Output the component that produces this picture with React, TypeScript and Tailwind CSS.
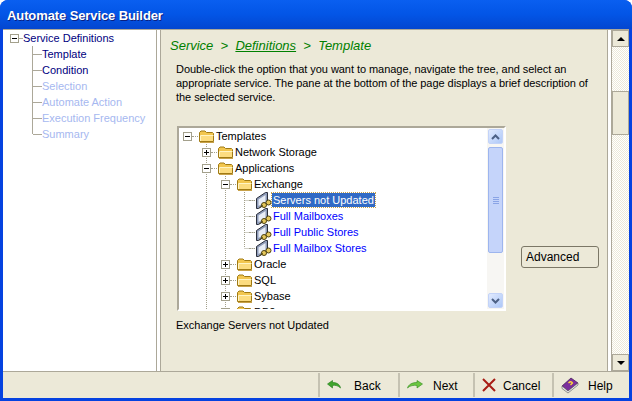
import React from 'react';

const Folder = () => (
  <svg width="17" height="16" viewBox="0 0 17 16" className="shrink-0">
    <path d="M1.5 13.5V4.5L3 3H7L8.5 4.5H14.5L15.5 5.5V13.5Z" fill="#f2c64f" stroke="#a07a14" />
    <path d="M3 8H15V13H3Z" fill="#fcdc80" />
    <path d="M2.5 13V7.5H15.5" fill="none" stroke="#fff4c4" />
    <path d="M2 14.5H16" stroke="#c8a24a" />
  </svg>
);

const ServerKey = () => (
  <svg width="17" height="17" viewBox="0 0 17 17" className="shrink-0">
    <path d="M1.5 6.5L10.5 0.5H12.5V11L3.5 16.5H1.5Z" fill="#8e9bb8" stroke="#2a2f3c" />
    <path d="M3.5 7.5L10.5 3V10L3.5 14Z" fill="#e8edf6" />
    <circle cx="9" cy="13" r="2.5" fill="#e6c85c" stroke="#4e4210" />
    <circle cx="13.5" cy="10.5" r="2.5" fill="#e6c85c" stroke="#4e4210" />
    <path d="M4.5 15.5L8 13.5" stroke="#4e4210" />
  </svg>
);

const ExpandBox = ({ open }: { open: boolean }) => (
  <svg width="9" height="9" viewBox="0 0 9 9" className="shrink-0">
    <rect x="0.5" y="0.5" width="8" height="8" fill="#fff" stroke="#a3a08c" />
    <path d="M2 4.5H7" stroke="#000" />
    {!open && <path d="M4.5 2V7" stroke="#000" />}
  </svg>
);

const treeRows = [
  { label: 'Templates', indent: 4, kind: 'open' },
  { label: 'Network Storage', indent: 23, kind: 'closed' },
  { label: 'Applications', indent: 23, kind: 'open' },
  { label: 'Exchange', indent: 42, kind: 'open' },
  { label: 'Servers not Updated', indent: 61, kind: 'leaf', selected: true },
  { label: 'Full Mailboxes', indent: 61, kind: 'leaf' },
  { label: 'Full Public Stores', indent: 61, kind: 'leaf' },
  { label: 'Full Mailbox Stores', indent: 61, kind: 'leaf' },
  { label: 'Oracle', indent: 42, kind: 'closed' },
  { label: 'SQL', indent: 42, kind: 'closed' },
  { label: 'Sybase', indent: 42, kind: 'closed' },
  { label: 'DB2', indent: 42, kind: 'closed' },
];

const TreeRow = ({ label, indent, kind, selected }: { label: string; indent: number; kind: string; selected?: boolean }) => (
  <div className="relative flex h-4 items-center shrink-0" style={{ paddingLeft: indent }}>
    {kind === 'leaf' ? <div className="w-[9px] shrink-0" /> : <ExpandBox open={kind === 'open'} />}
    <div className="w-[6px] h-px shrink-0 border-t border-dotted border-[#a3a08c]" />
    {kind === 'leaf' ? <ServerKey /> : <Folder />}
    <span
      className={`px-px leading-[14px] whitespace-nowrap ${
        selected
          ? 'bg-[#316ac5] text-white outline-1 outline-dotted outline-[#c9a24a]'
          : kind === 'leaf'
            ? 'text-[#0000ff]'
            : 'text-black'
      }`}
    >
      {label}
    </span>
  </div>
);

const steps = [
  { label: 'Template', cls: 'text-[#000080]' },
  { label: 'Condition', cls: 'text-[#000080]' },
  { label: 'Selection', cls: 'text-[#a6b8f0]' },
  { label: 'Automate Action', cls: 'text-[#a6b8f0]' },
  { label: 'Execution Frequency', cls: 'text-[#a6b8f0]' },
  { label: 'Summary', cls: 'text-[#a6b8f0]' },
];

const ScrollThumbLines = () => (
  <div className="flex flex-col gap-px">
    <div className="w-[6px] h-px bg-[#8aa4e6]" />
    <div className="w-[6px] h-px bg-[#8aa4e6]" />
    <div className="w-[6px] h-px bg-[#8aa4e6]" />
    <div className="w-[6px] h-px bg-[#8aa4e6]" />
  </div>
);

const Chevron = ({ up }: { up?: boolean }) => (
  <svg width="9" height="6" viewBox="0 0 9 6">
    <path d={up ? 'M1 5L4.5 1.5L8 5' : 'M1 1L4.5 4.5L8 1'} fill="none" stroke="#4d6185" strokeWidth="2" />
  </svg>
);

const FooterButton = ({ icon, label, width, gap }: { icon: React.ReactNode; label: string; width: string; gap: string }) => (
  <div className={`flex items-center h-[24px] border-l-2 border-[#c5c2b2] pl-[7px] ${width} ${gap}`}>
    {icon}
    <span className="mt-[2px]">{label}</span>
  </div>
);

export default function App() {
  return (
    <div className="w-[632px] h-[401px] bg-[#0542e0] rounded-t-[8px] flex flex-col overflow-hidden text-[11px] text-black font-['Liberation_Sans',sans-serif]">
      <div className="h-[29px] shrink-0 flex items-center pl-[7px] pt-[2px] bg-gradient-to-b from-[#0a5ff0] via-[#0355e6] to-[#0346d0]">
        <span className="font-bold text-[13px] text-white tracking-[-0.1px] [text-shadow:1px_1px_#0a1f80]">Automate Service Builder</span>
      </div>
      <div className="flex-1 min-h-0 mx-[3px] mb-[3px] bg-[#ece9d8] flex flex-col">
        <div className="h-[343px] flex shrink-0 border-t border-b border-[#aca899]">
          {/* step list */}
          <div className="w-[153px] shrink-0 bg-white pl-[7px]">
            <div className="flex items-center h-4">
              <ExpandBox open />
              <div className="w-[4px] h-px bg-[#aca899]" />
              <span className="text-[#000080]">Service Definitions</span>
            </div>
            <div className="ml-[22px]">
              {steps.map((s, i) => (
                <div key={s.label} className="flex h-4">
                  <div className={`w-px bg-[#aca899] ${i === steps.length - 1 ? 'h-[8px]' : 'h-4'}`} />
                  <div className="w-[9px] h-px mt-[8px] bg-[#aca899]" />
                  <span className={`leading-4 ${s.cls}`}>{s.label}</span>
                </div>
              ))}
            </div>
          </div>
          <div className="w-[5px] shrink-0 border-x border-[#aca899] bg-white" />
          {/* main pane */}
          <div className="flex-1 min-w-0 flex flex-col pl-[9px]">
            <div className="h-[28px] flex items-center text-[13px] italic text-[#008000] whitespace-pre mt-[2px]">
              Service  &gt;  <span className="underline">Definitions</span>  &gt;  Template
            </div>
            <p className="ml-[6px] w-[425px] leading-[14px] mt-[2px] tracking-[-0.05px]">
              Double-click the option that you want to manage, navigate the tree, and select an<br />
              appropriate service. The pane at the bottom of the page displays a brief description of<br />
              the selected service.
            </p>
            <div className="flex mt-[22px] ml-[7px]">
              <div className="w-[329px] h-[185px] shrink-0 border-2 border-t-[#aca899] border-l-[#aca899] border-r-white border-b-white bg-white flex overflow-hidden">
                <div className="flex-1 min-w-0 flex flex-col overflow-hidden relative">
                  <svg className="absolute left-0 top-0" width="120" height="190">
                    <g stroke="#a3a08c" strokeDasharray="1 1" fill="none">
                      <path d="M27.5 16V190" />
                      <path d="M46.5 48V190" />
                      <path d="M65.5 64V120" />
                      <path d="M65.5 72.5H76M65.5 88.5H76M65.5 104.5H76M65.5 120.5H76" />
                    </g>
                  </svg>
                  {treeRows.map((r) => (
                    <TreeRow key={r.label} {...r} />
                  ))}
                </div>
                <div className="w-[17px] shrink-0 bg-[#f7f6f3] flex flex-col p-px">
                  <div className="h-[15px] bg-gradient-to-br from-[#e1eafe] to-[#aec8f7] border border-[#c3d3f8] rounded-[2px] flex items-center justify-center">
                    <Chevron up />
                  </div>
                  <div className="h-[106px] mt-[3px] bg-[#c5d4fa] border border-[#9db5ee] rounded-[2px] flex items-center justify-center">
                    <ScrollThumbLines />
                  </div>
                  <div className="flex-1" />
                  <div className="h-[15px] bg-gradient-to-br from-[#e1eafe] to-[#aec8f7] border border-[#c3d3f8] rounded-[2px] flex items-center justify-center">
                    <Chevron />
                  </div>
                </div>
              </div>
              <div className="ml-[15px] mt-[120px] w-[78px] h-[22px] shrink-0 border border-[#7b7766] rounded-[3px] flex items-center pl-[4px] text-[12px]">
                Advanced
              </div>
            </div>
            <div className="ml-[6px] mt-[6px]">Exchange Servers not Updated</div>
          </div>
          <div className="w-[5px] shrink-0 border-x border-[#aca899] bg-white" />
          {/* page scrollbar */}
          <div className="w-[17px] shrink-0 flex flex-col bg-[repeating-conic-gradient(#ffffff_0_25%,#ece9d8_0_50%)] bg-[length:2px_2px]">
            <div className="h-[17px] bg-[#ece9d8] border border-[#aca899] flex items-center justify-center">
              <div className="w-0 h-0 border-x-[4px] border-x-transparent border-b-[4px] border-b-black" />
            </div>
            <div className="h-[44px]" />
            <div className="h-[44px] bg-[#ece9d8] border border-[#aca899]" />
            <div className="flex-1" />
            <div className="h-[17px] bg-[#ece9d8] border border-[#aca899] flex items-center justify-center">
              <div className="w-0 h-0 border-x-[4px] border-x-transparent border-t-[4px] border-t-black" />
            </div>
          </div>
        </div>
        {/* footer toolbar */}
        <div className="flex-1 flex items-center justify-end text-[12px] pr-[5px]">
          <FooterButton label="Back" width="w-[80px]" gap="gap-[13px]" icon={
            <svg width="14" height="10" viewBox="0 0 14 10"><path d="M5.5 0.5L0.5 4L5.5 8V5.5C8 5 11 5.5 13.5 8C13 4.5 10 2.5 5.5 2.5Z" fill="#3fa52c" stroke="#1f7a18" strokeWidth="0.6" /></svg>
          } />
          <FooterButton label="Next" width="w-[75px]" gap="gap-[10px]" icon={
            <svg width="16" height="10" viewBox="0 0 16 10"><path d="M10 0.5L15.5 4L10 8V5.5C7 5 3 5.5 0.5 8C1.5 4.5 5 2.5 10 2.5Z" fill="#6cc640" stroke="#2f8a1c" strokeWidth="0.6" /></svg>
          } />
          <FooterButton label="Cancel" width="w-[79px]" gap="gap-[7px]" icon={
            <svg width="14" height="14" viewBox="0 0 14 14"><path d="M1 1L13 13M13 1L1 13" stroke="#a81c14" strokeWidth="2" /></svg>
          } />
          <FooterButton label="Help" width="w-[72px]" gap="gap-[9px]" icon={
            <svg width="18" height="17" viewBox="0 0 18 17"><path d="M1 9L10 1L17 6L7 14Z" fill="#7a2f9c" stroke="#3d1550" strokeWidth="0.7" /><path d="M1 9V11.5L7 16L17 8V6L7 14Z" fill="#e8e8e8" stroke="#555" strokeWidth="0.6" /><path d="M7.5 6Q10 3.5 11.5 6L9.5 8" fill="none" stroke="#ffd83a" strokeWidth="1.4" /></svg>
          } />
        </div>
      </div>
    </div>
  );
}
